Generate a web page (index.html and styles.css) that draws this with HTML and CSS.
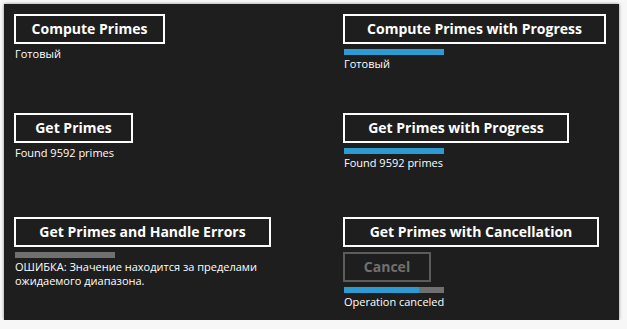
FILE: index.html
```html
<!DOCTYPE html>
<html>
<head>
<meta charset="utf-8">
<link rel="stylesheet" href="styles.css">
</head>
<body>
<div class="window">
  <div class="cell">
    <button class="btn w-compute">Compute Primes</button>
    <div class="status">Готовый</div>
  </div>
  <div class="cell">
    <button class="btn w-compute-progress">Compute Primes with Progress</button>
    <div class="bar"><div class="fill" style="width:100%"></div></div>
    <div class="status after-bar">Готовый</div>
  </div>
  <div class="cell">
    <button class="btn w-get">Get Primes</button>
    <div class="status">Found 9592 primes</div>
  </div>
  <div class="cell">
    <button class="btn w-get-progress">Get Primes with Progress</button>
    <div class="bar"><div class="fill" style="width:100%"></div></div>
    <div class="status after-bar">Found 9592 primes</div>
  </div>
  <div class="cell">
    <button class="btn w-errors">Get Primes and Handle Errors</button>
    <div class="bar"><div class="fill" style="width:0%"></div></div>
    <div class="status after-bar error">ОШИБКА: Значение находится за пределами ожидаемого диапазона.</div>
  </div>
  <div class="cell">
    <button class="btn w-cancellation">Get Primes with Cancellation</button>
    <button class="btn disabled w-cancel">Cancel</button>
    <div class="bar"><div class="fill" style="width:75%"></div></div>
    <div class="status after-bar">Operation canceled</div>
  </div>
</div>
</body>
</html>
```

FILE: styles.css
```css
html, body {
  margin: 0;
  padding: 0;
  background: #f7f7f7;
}

body {
  font-family: "Open Sans", "Noto Sans", sans-serif;
}

.window {
  margin: 4px 0 0 4px;
  width: 615px;
  height: 316px;
  box-sizing: border-box;
  background: #1e1e1e;
  box-shadow: 0 0 3px rgba(0, 0, 0, 0.45);
  padding: 10px 0 0 10px;
  display: grid;
  grid-template-columns: 329px 1fr;
  grid-template-rows: 99px 104px 1fr;
}

.cell {
  display: flex;
  flex-direction: column;
  align-items: flex-start;
}

.btn {
  height: 30px;
  box-sizing: border-box;
  border: 2px solid #ffffff;
  background: transparent;
  color: #ffffff;
  font-family: "Open Sans", "Noto Sans", sans-serif;
  font-weight: 700;
  font-size: 14px;
  padding: 0;
  margin: 0;
  line-height: 26px;
  text-align: center;
}

.w-compute { width: 151px; }
.w-compute-progress { width: 263px; }
.w-get { width: 119px; }
.w-get-progress { width: 226px; }
.w-errors { width: 257px; }
.w-cancellation { width: 256px; }
.w-cancel { width: 88px; }

.btn.disabled {
  margin-top: 5px;
  border-color: #5c5c5c;
  color: #707070;
}

.bar {
  margin-top: 5px;
  margin-left: 1px;
  width: 100px;
  height: 6px;
  background: #707070;
}

.fill {
  height: 100%;
  background: #2d9bd2;
}

.status {
  margin-top: 3px;
  margin-left: 1px;
  color: #ffffff;
  font-size: 11px;
  line-height: 14px;
}

.status.after-bar {
  margin-top: 2px;
}

.error {
  max-width: 275px;
}
```
